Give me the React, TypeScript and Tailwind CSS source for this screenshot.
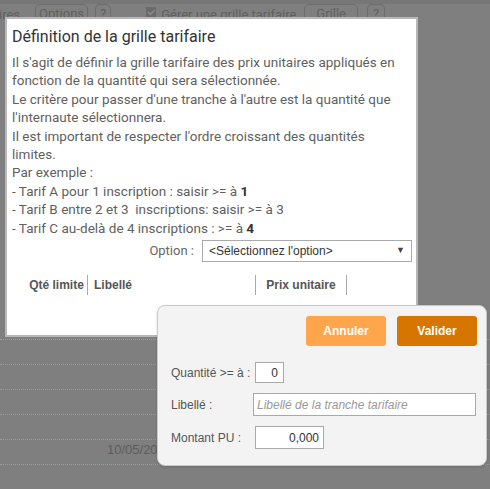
import { Check } from "lucide-react";

function BgButton({ label, className }: { label: string; className?: string }) {
    return (
        <span className={`h-[20px] px-[3px] border border-[#6c6c6c] rounded-[5px] leading-[18px] ${className ?? ""}`}>
            {label}
        </span>
    )
}

function Backdrop() {
    return (
        <div className="flex flex-col w-full h-full" style={{ fontFamily: "Roboto, sans-serif" }}>
            <div className="h-[4px] bg-[#777777]" />
            <div className="flex items-start h-[16px] text-[13px] text-[#606060]">
                <span className="-ml-[1px] leading-[22px]">ires</span>
                <BgButton label="Options" className="ml-[15px]" />
                <BgButton label="?" className="ml-[7px] px-[4px]" />
                <span className="ml-[35px] mt-[3px] w-[10px] h-[10px] bg-[#6a6a6a] flex items-center justify-center">
                    <Check size={9} strokeWidth={4} color="#8a8a8a" />
                </span>
                <span className="ml-[5px] leading-[22px]">Gérer une grille tarifaire</span>
                <BgButton label="Grille" className="ml-[8px] px-[11px]" />
                <BgButton label="?" className="ml-[9px] px-[5px]" />
            </div>
            <div className="flex flex-col mt-[319px] border-t border-dotted border-[#9a9a9a]">
                {[0, 1, 2, 3, 4].map((i) => (
                    <div key={i} className="h-[25px] border-b border-dotted border-[#9a9a9a] flex items-end justify-start">
                        {i === 4 && (
                            <span className="ml-[107px] mb-[5px] text-[13px] text-[#5c5c5c]" style={{ fontFamily: "'Liberation Sans', Arial, sans-serif" }}>
                                10/05/2019
                            </span>
                        )}
                    </div>
                ))}
            </div>
        </div>
    )
}

function Modal() {
    return (
        <div className="absolute left-[5px] top-[17px] w-[413px] h-[320px] bg-white border-2 border-[#b8b8b8]">
            <h2 className="ml-[5px] mt-[8px] text-[16px] leading-[20px] text-[#333333]" style={{ fontFamily: "Roboto, sans-serif" }}>
                Définition de la grille tarifaire
            </h2>
            <p className="ml-[5px] mt-[6px] text-[13.5px] leading-[18.4px] text-[#5f5f5f]" style={{ fontFamily: "Roboto, sans-serif" }}>
                Il s'agit de définir la grille tarifaire des prix unitaires appliqués en<br />
                fonction de la quantité qui sera sélectionnée.<br />
                Le critère pour passer d'une tranche à l'autre est la quantité que<br />
                l'internaute sélectionnera.<br />
                Il est important de respecter l'ordre croissant des quantités<br />
                limites.<br />
                Par exemple :<br />
                - Tarif A pour 1 inscription : saisir &gt;= à <b className="text-[#333333]">1</b><br />
                - Tarif B entre 2 et 3&nbsp; inscriptions: saisir &gt;= à 3<br />
                - Tarif C au-delà de 4 inscriptions : &gt;= à <b className="text-[#333333]">4</b>
            </p>
            <div className="flex items-center justify-end mr-[4px] mt-[3px]" style={{ fontFamily: "Roboto, sans-serif" }}>
                <span className="text-[13px] text-[#666666] mr-[8px]">Option :</span>
                <div className="w-[210px] h-[22px] border border-[#aaaaaa] flex items-center justify-between px-[6px] text-[12px] text-[#333333]" style={{ fontFamily: "'Liberation Sans', Arial, sans-serif" }}>
                    <span>&lt;Sélectionnez l'option&gt;</span>
                    <span className="text-[9px] text-[#444444]">▼</span>
                </div>
            </div>
            <div className="flex mt-[13px] ml-[19px] text-[12px] font-bold text-[#555555]" style={{ fontFamily: "'Liberation Sans', Arial, sans-serif" }}>
                <div className="w-[62px] h-[20px] border-r border-[#aaaaaa] flex items-center justify-center">Qté limite</div>
                <div className="w-[168px] h-[20px] border-r border-[#aaaaaa] flex items-center pl-[6px]">Libellé</div>
                <div className="w-[91px] h-[20px] border-r border-[#aaaaaa] flex items-center justify-center">Prix unitaire</div>
            </div>
        </div>
    )
}

function TrancheForm() {
    return (
        <div className="absolute left-[157px] top-[305px] w-[330px] h-[161px] bg-[#f3f3f3] border border-[#c9c9c9] rounded-[8px] shadow-[0_1px_3px_rgba(0,0,0,0.15)] text-[12px] text-[#555555]" style={{ fontFamily: "'Liberation Sans', Arial, sans-serif" }}>
            <div className="flex justify-end gap-[11px] mt-[10px] mr-[9px]">
                <button type="button" className="w-[80px] h-[30px] rounded-[3px] bg-[#ffa64d] text-white font-bold text-[12px]">Annuler</button>
                <button type="button" className="w-[80px] h-[30px] rounded-[3px] bg-[#d67600] text-white font-bold text-[12px]">Valider</button>
            </div>
            <div className="flex flex-col mt-[16px] ml-[13px] gap-[9px]">
                <div className="flex items-center h-[21px]">
                    <span className="w-[84px]">Quantité &gt;= à :</span>
                    <div className="w-[29px] h-[21px] bg-white border border-[#a9a9a9] flex items-center justify-end pr-[5px] text-[#333333]">0</div>
                </div>
                <div className="flex items-center h-[23px] mt-[1px]">
                    <span className="w-[84px] -ml-[2px] pl-[2px]">Libellé :</span>
                    <div className="w-[223px] h-[23px] bg-white border border-[#a9a9a9] flex items-center pl-[3px] italic text-[#999999]">Libellé de la tranche tarifaire</div>
                </div>
                <div className="flex items-center h-[23px] mt-[1px]">
                    <span className="w-[84px]">Montant PU :</span>
                    <div className="w-[69px] h-[23px] bg-white border border-[#a9a9a9] flex items-center justify-end pr-[4px] text-[#333333]">0,000</div>
                </div>
            </div>
        </div>
    )
}

export default function App() {
    return (
        <div className="relative w-[490px] h-[489px] bg-[#7f7f7f] overflow-hidden">
            <Backdrop />
            <Modal />
            <TrancheForm />
        </div>
    )
}
